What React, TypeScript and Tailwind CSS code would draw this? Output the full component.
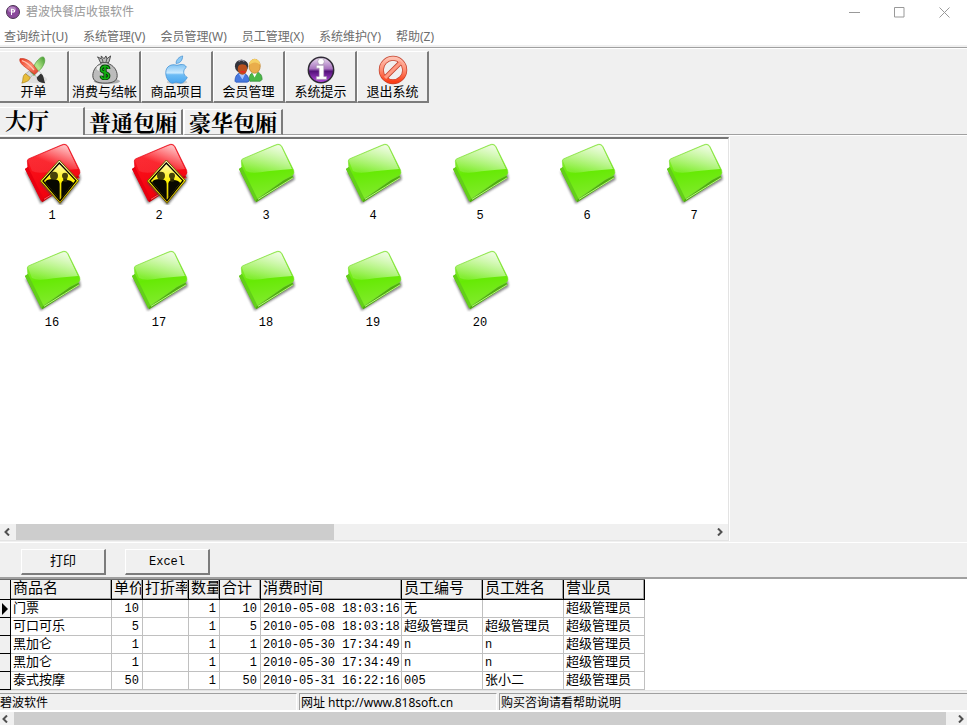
import type { ReactNode } from "react";

const FONT = "font-['Liberation_Mono','Noto_Sans_CJK_SC',monospace]";
const UI = "font-['Noto_Sans','Noto_Sans_CJK_SC',sans-serif]";

const menus = ["查询统计(U)", "系统管理(V)", "会员管理(W)", "员工管理(X)", "系统维护(Y)", "帮助(Z)"];

function BrushIcon() {
  return (
    <svg viewBox="0 0 32 32" className="size-8">
      <defs>
        <linearGradient id="br" x1="0" y1="0" x2="1" y2="1">
          <stop offset="0" stopColor="#e8331c" />
          <stop offset=".5" stopColor="#ff8b70" />
          <stop offset="1" stopColor="#d8341c" />
        </linearGradient>
        <linearGradient id="bg" x1="1" y1="0" x2="0" y2="1">
          <stop offset="0" stopColor="#3f9a2c" />
          <stop offset=".5" stopColor="#b5e58c" />
          <stop offset="1" stopColor="#55a73b" />
        </linearGradient>
      </defs>
      <ellipse cx="17" cy="26" rx="13" ry="4" fill="#dedede" />
      <path d="M26 2c3 3 1 8-2 12l-8 8-4-4 6-10c3-4 5-6 8-6z" fill="url(#bg)" stroke="#4d9b35" strokeWidth=".7" />
      <path d="M11 17l4 4-3 3-5-4z" fill="#d5d7da" stroke="#888" strokeWidth=".5" />
      <path d="M7 20l5 4c-1 4-5 5-9 6 2-3 0-8 4-10z" fill="#e8bd3b" stroke="#a98119" strokeWidth=".7" />
      <path d="M1 4c4-1 9 1 13 5l7 9-4 3-9-7C4 11 0 8 1 4z" fill="url(#br)" stroke="#c43420" strokeWidth=".7" />
      <path d="M3 6c4 1 8 4 13 10" stroke="#ffc1b0" strokeWidth="1.5" fill="none" />
      <path d="M21 17l3 3-5 4-2-3z" fill="#eceef0" stroke="#888" strokeWidth=".5" />
      <path d="M23 20c4 1 3 6 5 10-5 0-9-2-9-6z" fill="#333" />
    </svg>
  );
}

function MoneyIcon() {
  return (
    <svg viewBox="0 0 32 32" className="size-8">
      <ellipse cx="18" cy="28" rx="14" ry="3" fill="#aaa" />
      <path d="M12 9C10 7 10 4 8 2l4 2 0-3 3 3 2-3 1 3 4-3c-1 3-1 6-3 8 6 2 10 7 10 13 0 6-5 8-13 8S3 28 3 22c0-6 4-11 9-13z" fill="#bcbcbc" stroke="#444" />
      <path d="M11 8h9M13 4l1 4M18 4l-1 4" stroke="#555" strokeWidth="1" />
      <ellipse cx="12" cy="14" rx="5" ry="3" fill="#eee" />
      <path d="M20 15c0-2-2-3-4-3s-4 1-4 4 8 2 8 6c0 2-2 3-4 3s-4-1-4-3M16 11v15" fill="none" stroke="#063c06" strokeWidth="3.5" />
      <path d="M20 15c0-2-2-3-4-3s-4 1-4 4 8 2 8 6c0 2-2 3-4 3s-4-1-4-3M16 11v15" fill="none" stroke="#12b312" strokeWidth="1.7" />
    </svg>
  );
}

function AppleIcon() {
  return (
    <svg viewBox="0 0 32 32" className="size-8">
      <defs>
        <linearGradient id="ap" x1="0" y1="0" x2="0" y2="1">
          <stop offset="0" stopColor="#7fc2f2" />
          <stop offset=".45" stopColor="#cbeaff" />
          <stop offset=".55" stopColor="#6dbcf5" />
          <stop offset="1" stopColor="#4aa6f0" />
        </linearGradient>
      </defs>
      <ellipse cx="16" cy="29" rx="11" ry="2" fill="#ccc" />
      <path d="M15 9c0-4 3-7 7-8 0 5-3 8-7 8z" fill="#8ccaf6" stroke="#3a88cc" strokeWidth=".7" />
      <path d="M16 11c4-1 8-2 10 2-4 3-4 8 1 11-2 3-4 6-7 6-2 0-3-1-5-1s-2 1-4 1C8 30 4 25 4 19c0-7 6-10 12-8z" fill="url(#ap)" stroke="#3d8fd4" strokeWidth=".8" />
    </svg>
  );
}

function UsersIcon() {
  return (
    <svg viewBox="0 0 32 32" className="size-8">
      <path d="M16 27c0-6 3-9 7-9s7 3 7 8l-2 2H17z" fill="#4cb848" stroke="#27812a" strokeWidth=".7" />
      <path d="M19 18l3 6 3-6z" fill="#fff" />
      <ellipse cx="22" cy="12" rx="6" ry="7.5" fill="#e9ad4b" stroke="#b97a28" strokeWidth=".7" />
      <path d="M16 11c0-9 12-9 12 0-3-4-8-4-12 0z" fill="#f4cf65" />
      <path d="M1 28c0-6 3-9 7-9s8 3 8 9l-2 1H2z" fill="#4779df" stroke="#1f4bb0" strokeWidth=".7" />
      <path d="M5 20l4 6 3-6z" fill="#a9c7ff" />
      <ellipse cx="8" cy="12" rx="7" ry="7" fill="#34343c" />
      <ellipse cx="9" cy="15" rx="5" ry="6" fill="#b9501d" />
      <path d="M3 12c3-3 8-3 12 0l-1-4-5-2-5 2z" fill="#34343c" />
      <path d="M7 18h5" stroke="#e22" strokeWidth="1.5" />
      <path d="M5 7c2-2 4-2 6 0" stroke="#8a8a98" strokeWidth="1.5" fill="none" />
    </svg>
  );
}

function InfoIcon() {
  return (
    <svg viewBox="0 0 32 32" className="size-8">
      <defs>
        <linearGradient id="inf" x1="0" y1="0" x2="0" y2="1">
          <stop offset="0" stopColor="#eadcf0" />
          <stop offset=".45" stopColor="#a873bf" />
          <stop offset=".55" stopColor="#54127a" />
          <stop offset="1" stopColor="#b64be0" />
        </linearGradient>
      </defs>
      <circle cx="16" cy="16" r="13.500" fill="url(#inf)" stroke="#2f2a35" strokeWidth="1.6" />
      <circle cx="16" cy="7" r="3.500" fill="#fff" stroke="#9a86a4" strokeWidth=".6" />
      <path d="M11 11h8v12h3v3H11v-3h3v-9h-3z" fill="#fff" stroke="#9a86a4" strokeWidth=".6" />
    </svg>
  );
}

function StopIcon() {
  return (
    <svg viewBox="0 0 32 32" className="size-8">
      <defs>
        <linearGradient id="st" x1="0" y1="0" x2="0" y2="1">
          <stop offset="0" stopColor="#ffc0b0" />
          <stop offset=".5" stopColor="#ff8d72" />
          <stop offset="1" stopColor="#fb3d16" />
        </linearGradient>
      </defs>
      <g fill="none">
        <circle cx="16" cy="16" r="12.500" stroke="#c3432e" strokeWidth="5.4" />
        <path d="M8 24L24 8" stroke="#c3432e" strokeWidth="5" />
        <circle cx="16" cy="16" r="12.500" stroke="url(#st)" strokeWidth="3.8" />
        <path d="M7.500 24.500L24.500 7.500" stroke="#ff9a82" strokeWidth="3.4" />
      </g>
    </svg>
  );
}

function FolderDefs() {
  return (
    <svg className="absolute size-0" aria-hidden="true">
      <defs>
        <linearGradient id="green" x1=".45" y1="0" x2=".6" y2="1">
          <stop offset="0" stopColor="#9cf050" />
          <stop offset=".5" stopColor="#66ea04" />
          <stop offset="1" stopColor="#84ea30" />
        </linearGradient>
        <linearGradient id="red" x1=".45" y1="0" x2=".6" y2="1">
          <stop offset="0" stopColor="#ff1820" />
          <stop offset="1" stopColor="#f0000c" />
        </linearGradient>
        <linearGradient id="gloss" x1="1" y1="0" x2=".3" y2="1">
          <stop offset="0" stopColor="#fff" stopOpacity=".95" />
          <stop offset="1" stopColor="#fff" stopOpacity=".15" />
        </linearGradient>
        <linearGradient id="glossRed" x1="1" y1="0" x2=".3" y2="1">
          <stop offset="0" stopColor="#fff" stopOpacity=".9" />
          <stop offset=".7" stopColor="#fff" stopOpacity=".1" />
        </linearGradient>
        <linearGradient id="sign" x1="0" y1="0" x2="0" y2="1">
          <stop offset="0" stopColor="#fffbd0" />
          <stop offset=".5" stopColor="#fff200" />
          <stop offset="1" stopColor="#d8b800" />
        </linearGradient>
        <filter id="soft" x="-20%" y="-20%" width="140%" height="140%">
          <feGaussianBlur stdDeviation="3" />
        </filter>
      </defs>
    </svg>
  );
}

function Folder({ busy }: { busy: boolean }) {
  return (
    <svg viewBox="0 0 192 192" className="size-16">
      <path d="M16 92L62 188 182 116 180 98z" fill="#555" opacity=".7" filter="url(#soft)" />
      <path d="M15 84l12-8 148 28 4 6-112 74z" fill={busy ? "#c9000a" : "#4fae10"} />
      <path d="M22 60Q22 55 27 53L124 12Q138 6 144 17L179 88Q182 96 176 103L150 116 72 172Q66 174 63 168L24 84z" fill={busy ? "url(#red)" : "url(#green)"} stroke={busy ? "#e00010" : "#7cdc35"} strokeWidth="2" />
      <path d="M15 84l9-6 46 94-6 10z" fill={busy ? "#e80010" : "#63cf18"} />
      <path d="M24 60Q24 56 28 54L124 14Q138 9 142 18L174 84Q120 88 80 94 50 98 36 90z" fill={busy ? "url(#glossRed)" : "url(#gloss)"} />
      <path d="M72 175l62-38 44-27" stroke={busy ? "#ff5a60" : "#b6f57e"} strokeWidth="3" fill="none" />
      {busy && (
        <g>
          <path d="M119 62l60 60-58 72-60-68z" fill="#444" opacity=".7" filter="url(#soft)" />
          <path d="M118 57l58 62-56 68-59-67z" fill="url(#sign)" stroke="#6a5a00" strokeWidth="3" strokeLinejoin="round" />
          <path d="M118 66l50 53-48 60-51-59z" fill="none" stroke="#000" strokeWidth="4" />
          <path d="M75 124q5-10 24-10 19 0 20 14v47l-4-4zM124 172v-45q2-10 15-10 14 0 21 9z" fill="#080800" />
          <circle cx="102" cy="104" r="12" fill="#47430a" />
          <circle cx="135" cy="104" r="9" fill="#47430a" />
          <path d="M129 112h13l-2 10h-9z" fill="#2f2c05" />
        </g>
      )}
    </svg>
  );
}

const tools: { label: string; icon: ReactNode }[] = [
  { label: "开单", icon: <BrushIcon /> },
  { label: "消费与结帐", icon: <MoneyIcon /> },
  { label: "商品项目", icon: <AppleIcon /> },
  { label: "会员管理", icon: <UsersIcon /> },
  { label: "系统提示", icon: <InfoIcon /> },
  { label: "退出系统", icon: <StopIcon /> },
];

const tables = [1, 2, 3, 4, 5, 6, 7, 16, 17, 18, 19, 20];

const columns = ["商品名", "单价", "打折率", "数量", "合计", "消费时间", "员工编号", "员工姓名", "营业员"];
const rows = [
  ["门票", "10", "", "1", "10", "2010-05-08 18:03:16", "无", "", "超级管理员"],
  ["可口可乐", "5", "", "1", "5", "2010-05-08 18:03:18", "超级管理员", "超级管理员", "超级管理员"],
  ["黑加仑", "1", "", "1", "1", "2010-05-30 17:34:49", "n", "n", "超级管理员"],
  ["黑加仑", "1", "", "1", "1", "2010-05-30 17:34:49", "n", "n", "超级管理员"],
  ["泰式按摩", "50", "", "1", "50", "2010-05-31 16:22:16", "005", "张小二", "超级管理员"],
];

function Chevron({ flip }: { flip?: boolean }) {
  return (
    <svg viewBox="0 0 8 8" className={flip ? "size-2 rotate-180" : "size-2"}>
      <path d="M6 0.500L2.500 4 6 7.500" fill="none" stroke="#505050" strokeWidth="2" />
    </svg>
  );
}

export default function App() {
  return (
    <div className={`flex h-screen flex-col overflow-hidden bg-[#f0f0f0] text-black ${FONT}`}>
      <FolderDefs />
      <header className={`bg-white text-xs ${UI}`}>
        <div className="flex h-6 items-center pl-1.5">
          <svg viewBox="0 0 14 14" className="size-3.5">
            <circle cx="7" cy="7" r="6.500" fill="#8b4a9c" stroke="#4b3552" />
            <ellipse cx="6" cy="4.500" rx="4" ry="3" fill="#b384c0" />
            <path d="M5.500 10V4l3 1v2H6" fill="none" stroke="#fff" strokeWidth="1" />
          </svg>
          <h1 className="ml-1.5 flex-1 text-[#999]">碧波快餐店收银软件</h1>
          <div className="flex">
            <button aria-label="最小化" className="flex w-[45px] justify-center">
              <svg viewBox="0 0 11 11" className="size-[11px]"><path d="M0 5.500h11" stroke="#999" /></svg>
            </button>
            <button aria-label="最大化" className="flex w-[45px] justify-center">
              <svg viewBox="0 0 11 11" className="size-[11px]"><path d="M.5.5h9.500v9.500H.5z" fill="none" stroke="#999" /></svg>
            </button>
            <button aria-label="关闭" className="flex w-[45px] justify-center">
              <svg viewBox="0 0 11 11" className="size-[11px]"><path d="M.5.5l10 10M10.500.5l-10 10" stroke="#999" /></svg>
            </button>
          </div>
        </div>
        <nav className="flex h-[21px] items-end gap-[15px] pl-1 text-[#6d6d6d]">
          {menus.map((m) => (
            <button key={m} className="leading-4">{m}</button>
          ))}
        </nav>
      </header>
      <div className="mt-0.5 h-0.5 border-t border-[#a0a0a0] bg-white" />

      <div className="mt-0.5 flex">
        {tools.map((t, i) => (
          <button
            key={t.label}
            className={`flex h-[52px] flex-col items-center border-r-2 border-b-2 border-t border-t-white border-r-[#7c7c7c] border-b-[#7c7c7c] pt-[3px] ${i === 0 ? "w-[69px]" : "w-[72px] border-l border-l-white"}`}
          >
            {t.icon}
            <span className="text-[13px] leading-4 whitespace-nowrap">{t.label}</span>
          </button>
        ))}
      </div>

      <div role="tablist" className="mt-1 flex h-7 items-end text-[22px] font-bold leading-6 font-['Noto_Serif_CJK_SC','Noto_Sans_CJK_SC',serif]">
        <button role="tab" aria-selected="true" className="flex h-7 w-[85px] border-t border-r-2 border-t-white border-r-[#7c7c7c] pl-[5px]">大厅</button>
        <button role="tab" aria-selected="false" className="flex h-[26px] w-[98px] border-t border-r-2 border-b border-t-white border-r-[#7c7c7c] border-b-[#a0a0a0] pl-1">普通包厢</button>
        <button role="tab" aria-selected="false" className="flex h-[26px] w-[100px] border-t border-r-2 border-b border-l-2 border-t-white border-l-white border-r-[#7c7c7c] border-b-[#a0a0a0] pl-1">豪华包厢</button>
        <span className="flex-1 border-b border-[#a0a0a0]" />
      </div>

      <div className="flex min-h-0 flex-1 border-t border-white pt-px">
        <main className="flex min-w-0 flex-1 flex-col border-t-2 border-r border-b border-t-[#757575] border-r-[#e3e3e3] border-b-[#e3e3e3]">
          <div className="min-h-0 flex-1 overflow-hidden bg-white">
            <ul className="grid grid-cols-[repeat(7,107px)] auto-rows-[107px]">
              {tables.map((n) => (
                <li key={n}>
                  <button className="flex w-[104px] flex-col items-center pt-0.5">
                    <Folder busy={n < 3} />
                    <span className="mt-[3px] text-xs leading-4">{n}</span>
                  </button>
                </li>
              ))}
            </ul>
          </div>
          <div className="flex h-4 items-center">
            <span className="flex w-4 pl-[3px]"><Chevron /></span>
            <span className="h-full w-[318px] bg-[#cdcdcd]" />
            <span className="flex flex-1 justify-end pr-1"><Chevron flip /></span>
          </div>
        </main>
        <aside className="w-[238px] border-l border-white" />
      </div>

      <div className="mt-px flex gap-[19px] border-t border-white pt-1.5 pb-0.5 pl-[21px]">
        {["打印", "Excel"].map((b) => (
          <button key={b} className="h-[26px] w-[85px] border-t border-r-2 border-b-2 border-l border-t-white border-r-[#7c7c7c] border-b-[#7c7c7c] border-l-white text-[13px]">
            {b === "Excel" ? <span className="text-xs">{b}</span> : b}
          </button>
        ))}
      </div>

      <section className="border-t-2 border-b border-t-[#a0a0a0] border-b-[#e3e3e3] bg-white">
        <table className="w-[645px] table-fixed border-separate border-spacing-0 border-t border-[#696969] text-[13px]">
          <colgroup>
            <col className="w-[11px]" />
            <col className="w-[101px]" />
            <col className="w-[31px]" />
            <col className="w-[46px]" />
            <col className="w-[31px]" />
            <col className="w-[41px]" />
            <col className="w-[141px]" />
            <col className="w-[81px]" />
            <col className="w-[81px]" />
            <col className="w-[81px]" />
          </colgroup>
          <thead>
            <tr className="h-5">
              <th className="border-r border-b border-black bg-[#f0f0f0] p-0" />
              {columns.map((c) => (
                <th key={c} scope="col" className="overflow-hidden border-r border-b border-black bg-[#f0f0f0] p-0 text-left text-[15px] font-normal whitespace-nowrap">
                  <div className="h-[19px] overflow-hidden border-r border-b border-[#a0a0a0] pl-0.5 leading-5">{c}</div>
                </th>
              ))}
            </tr>
          </thead>
          <tbody>
            {rows.map((r, i) => (
              <tr key={i} className="h-[18px]">
                <td className="border-r border-b border-black bg-[#f0f0f0] p-0">
                  {i === 0 && (
                    <svg viewBox="0 0 6 12" className="ml-0.5 h-3 w-1.5"><path d="M0 0l6 6-6 6z" /></svg>
                  )}
                </td>
                {r.map((c, j) => (
                  <td
                    key={j}
                    className={`overflow-hidden border-r border-b border-[#c0c0c0] px-0.5 pt-px pb-0 leading-4 whitespace-nowrap ${[1, 3, 4].includes(j) ? "pr-[3px] text-right" : ""} ${/^[\x20-\x7e]*$/.test(c) ? "text-xs" : ""}`}
                  >
                    {c}
                  </td>
                ))}
              </tr>
            ))}
          </tbody>
        </table>
      </section>

      <footer className={UI}>
        <div className="mt-0.5 flex gap-0.5 border-b-2 border-white text-xs leading-[18px]">
          <span className="h-[17px] w-[297px] border-t border-r border-t-[#a0a0a0] border-r-white">碧波软件</span>
          <span className="h-[17px] w-[198px] border-t border-r border-l border-t-[#a0a0a0] border-l-[#a0a0a0] border-r-white pl-px">网址 http://www.818soft.cn</span>
          <span className="h-[17px] flex-1 border-t border-l border-[#a0a0a0] pl-px">购买咨询请看帮助说明</span>
        </div>
        <div className="flex h-[13px] items-center">
          <span className="flex w-3.5 pl-px"><Chevron /></span>
          <span className="h-full flex-1 bg-[#cdcdcd]" />
          <span className="flex w-[21px] justify-end pr-0.5"><Chevron flip /></span>
        </div>
      </footer>
    </div>
  );
}
